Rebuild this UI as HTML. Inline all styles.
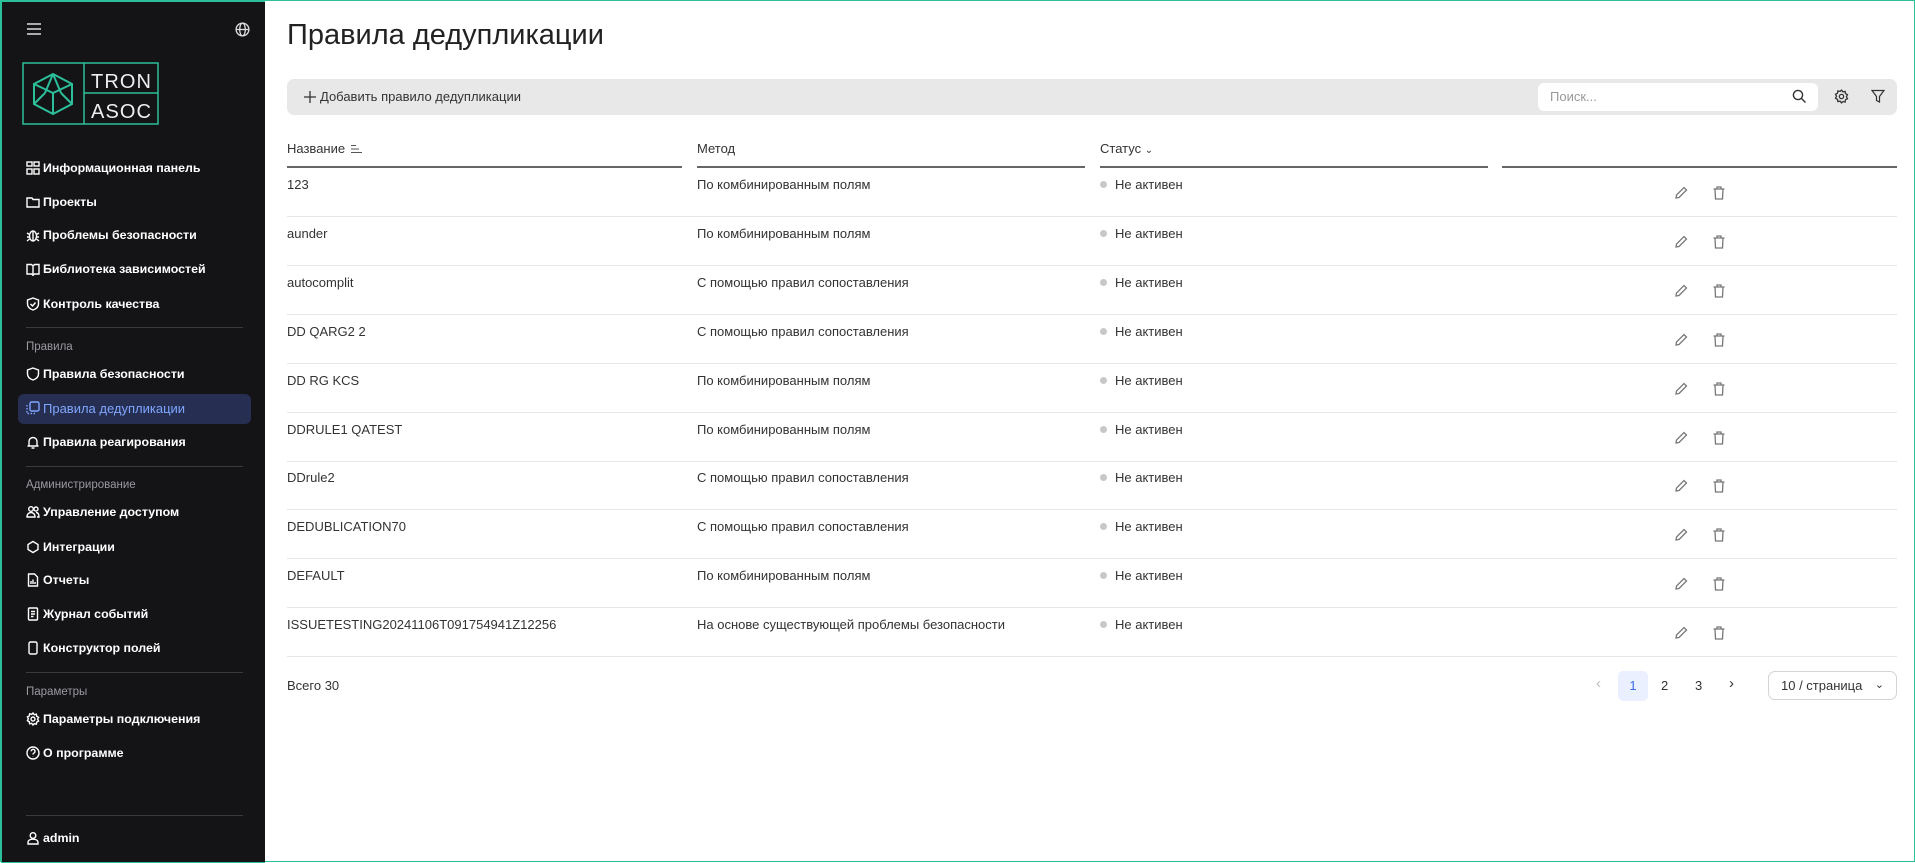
<!DOCTYPE html>
<html><head><meta charset="utf-8"><style>
*{box-sizing:border-box;margin:0;padding:0}
body{width:1915px;height:862px;overflow:hidden;background:#fff;font-family:"Liberation Sans",sans-serif;position:relative;border:1px solid #2bbf9a}
.sb{position:absolute;left:0;top:0;width:264px;height:862px;background:#141416;border-left:1px solid #2bbf9a;border-top:1px solid #2bbf9a;border-bottom:1px solid #2bbf9a}
.a{position:absolute;white-space:nowrap}
.it{position:absolute;left:24px;color:#fff;font-size:12.4px;font-weight:bold;display:flex;align-items:center;gap:3px;height:20px}
.it svg{width:14px;height:14px;stroke:#fff;fill:none;stroke-width:1.4}
.sec{position:absolute;left:24px;color:#9a9aa0;font-size:11.5px}
.dv{position:absolute;left:24px;width:217px;height:1px;background:#3a3a3e}
.t{font-size:13px;color:#333}
.sep{position:absolute;height:1px;background:#e6e6e6;left:286px;width:1610px}
.st{font-size:13px;color:#333}
.dot{display:inline-block;width:7px;height:7px;border-radius:50%;background:#c8c8c8;margin-right:8px;vertical-align:1px}
.ic{position:absolute;width:16px;height:16px;stroke:#777;fill:none;stroke-width:1.3}
</style></head><body>
<div class="sb">
<svg class="a" style="left:25px;top:21px" width="14" height="12" viewBox="0 0 14 12" stroke="#ddd" stroke-width="1.5"><path d="M0 1h14M0 6h14M0 11h14"/></svg>
<svg class="a" style="left:233px;top:20px" width="15" height="15" viewBox="0 0 16 16" stroke="#ddd" fill="none" stroke-width="1.4"><circle cx="8" cy="8" r="6.8"/><ellipse cx="8" cy="8" rx="3" ry="6.8"/><path d="M1 8h14"/></svg>
<svg class="a" style="left:20px;top:60px" width="137" height="63" viewBox="0 0 137 63">
<rect x="1" y="1" width="135" height="61" fill="none" stroke="#2bbf9a" stroke-width="1.5"/>
<path d="M62 1v61M62 31h74" stroke="#2bbf9a" stroke-width="1.5"/>
<g fill="none" stroke="#2bbf9a" stroke-width="2"><path d="M31 12l19 10v20l-19 10-19-10V22z"/><path d="M12 22l19 9 19-9M31 31v21M31 12l-8 19M31 12l8 19M12 42l11-11M50 42l-11-11"/></g>
<text x="69" y="26" fill="#eee" font-size="20" textLength="60" font-family="Liberation Sans">TRON</text>
<text x="69" y="56" fill="#eee" font-size="20" textLength="60" font-family="Liberation Sans">ASOC</text>
</svg>
<div class="it" style="top:156px"><svg viewBox="0 0 14 14"><rect x="1" y="1" width="5" height="4"/><rect x="8" y="1" width="5" height="4"/><rect x="1" y="8" width="5" height="5"/><rect x="8" y="8" width="5" height="5"/></svg>Информационная панель</div>
<div class="it" style="top:190px"><svg viewBox="0 0 14 14"><path d="M1 3h5l1 1.5h6V12H1z"/></svg>Проекты</div>
<div class="it" style="top:223px"><svg viewBox="0 0 14 14"><ellipse cx="7" cy="8" rx="3.5" ry="5"/><path d="M1 5l2.5 1.5M13 5l-2.5 1.5M1 9h2.5M13 9h-2.5M1 13l2.5-2M13 13l-2.5-2M7 3v10"/></svg>Проблемы безопасности</div>
<div class="it" style="top:257px"><svg viewBox="0 0 14 14"><path d="M1 2.5h4.5L7 4v9L5.5 12H1zM13 2.5H8.5L7 4v9l1.5-1H13z"/></svg>Библиотека зависимостей</div>
<div class="it" style="top:292px"><svg viewBox="0 0 14 14"><path d="M7 1l5.5 2v4c0 3-2.5 5-5.5 6C4 12 1.5 10 1.5 7V3z"/><path d="M4.5 7l2 2 3-3.5"/></svg>Контроль качества</div>
<div class="dv" style="top:325px"></div>
<div class="sec" style="top:339px">Правила</div>
<div class="it" style="top:362px"><svg viewBox="0 0 14 14"><path d="M7 1l5.5 2v4c0 3-2.5 5-5.5 6C4 12 1.5 10 1.5 7V3z"/></svg>Правила безопасности</div>
<div class="a" style="left:16px;top:392px;width:233px;height:30px;background:#262f52;border-radius:6px"></div>
<div class="it" style="top:396px;color:#7fa6ff;font-weight:normal;font-size:13px"><svg viewBox="0 0 14 14" style="stroke:#7fa6ff"><rect x="4" y="1" width="9" height="9" rx="1.5"/><path d="M1 4v8.5h8.5" stroke-dasharray="1.5 1.5"/></svg>Правила дедупликации</div>
<div class="it" style="top:430px"><svg viewBox="0 0 14 14"><path d="M3 11V6.5a4 4 0 018 0V11zM1.5 11h11M5.5 13h3"/></svg>Правила реагирования</div>
<div class="dv" style="top:464px"></div>
<div class="sec" style="top:477px">Администрирование</div>
<div class="it" style="top:500px"><svg viewBox="0 0 14 14"><circle cx="5" cy="4" r="2.3"/><circle cx="10" cy="4" r="2"/><path d="M1 12c0-3 2-4.5 4-4.5s4 1.5 4 4.5zM10 7.5c2 0 3 1.5 3 4.5h-2"/></svg>Управление доступом</div>
<div class="it" style="top:535px"><svg viewBox="0 0 14 14"><path d="M7 1.5l5 3v5l-5 3-5-3v-5z"/></svg>Интеграции</div>
<div class="it" style="top:568px"><svg viewBox="0 0 14 14"><path d="M2.5 1h6l3 3v9h-9z"/><path d="M5 11V8M7 11V6.5M9 11V9"/></svg>Отчеты</div>
<div class="it" style="top:602px"><svg viewBox="0 0 14 14"><rect x="2.5" y="1" width="9" height="12" rx="1"/><path d="M5 4.5h4M5 7h4M5 9.5h2.5"/></svg>Журнал событий</div>
<div class="it" style="top:636px"><svg viewBox="0 0 14 14"><rect x="3" y="1" width="8" height="12" rx="1.5"/></svg>Конструктор полей</div>
<div class="dv" style="top:670px"></div>
<div class="sec" style="top:684px">Параметры</div>
<div class="it" style="top:707px"><svg viewBox="0 0 14 14"><circle cx="7" cy="7" r="2"/><path d="M7 1l1.3 1.7 2.1-.5.3 2.1 1.9 1-1 1.9 1 1.9-1.9 1-.3 2.1-2.1-.5L7 13l-1.3-1.7-2.1.5-.3-2.1-1.9-1 1-1.9-1-1.9 1.9-1 .3-2.1 2.1.5z"/></svg>Параметры подключения</div>
<div class="it" style="top:741px"><svg viewBox="0 0 14 14"><circle cx="7" cy="7" r="6"/><path d="M5.2 5.3a1.9 1.9 0 113 1.5c-.8.5-1.2.9-1.2 1.7M7 10.2v.3"/></svg>О программе</div>
<div class="dv" style="top:813px"></div>
<div class="it" style="top:826px"><svg viewBox="0 0 14 14"><circle cx="7" cy="4.5" r="2.8"/><path d="M2 13v-1.5c0-2 2-3.3 5-3.3s5 1.3 5 3.3V13z"/></svg>admin</div>
</div>

<div class="a" style="left:286px;top:18px;font-size:29px;color:#222">Правила дедупликации</div>
<div class="a" style="left:286px;top:78px;width:1610px;height:36px;background:#e8e8e8;border-radius:7px"></div>
<svg class="a" style="left:302px;top:89px" width="14" height="14" viewBox="0 0 14 14" stroke="#333" stroke-width="1.3"><path d="M7 1v12M1 7h12"/></svg>
<div class="a t" style="left:319px;top:88px">Добавить правило дедупликации</div>
<div class="a" style="left:1537px;top:82px;width:280px;height:28px;background:#fff;border-radius:6px"></div>
<div class="a" style="left:1549px;top:88px;font-size:13px;color:#999">Поиск...</div>
<svg class="a" style="left:1791px;top:88px" width="15" height="15" viewBox="0 0 15 15" stroke="#333" fill="none" stroke-width="1.4"><circle cx="6" cy="6" r="4.6"/><path d="M9.5 9.5l4 4"/></svg>
<svg class="a" style="left:1833px;top:88px" width="15" height="15" viewBox="0 0 14 14" stroke="#333" fill="none" stroke-width="1.2"><circle cx="7" cy="7" r="2"/><path d="M7 1l1.3 1.7 2.1-.5.3 2.1 1.9 1-1 1.9 1 1.9-1.9 1-.3 2.1-2.1-.5L7 13l-1.3-1.7-2.1.5-.3-2.1-1.9-1 1-1.9-1-1.9 1.9-1 .3-2.1 2.1.5z"/></svg>
<svg class="a" style="left:1870px;top:88px" width="14" height="15" viewBox="0 0 14 15" stroke="#333" fill="none" stroke-width="1.2"><path d="M1 1.5h12L8.5 7.5V13l-3-1.5v-4z"/></svg>

<div class="a t" style="left:286px;top:140px">Название</div>
<svg class="a" style="left:350px;top:143px" width="12" height="10" viewBox="0 0 12 10" stroke="#555" stroke-width="1"><path d="M0 1.5h5M0 5h8M0 8.5h11"/></svg>
<div class="a t" style="left:696px;top:140px">Метод</div>
<div class="a st" style="left:1099px;top:140px">Статус <span style="font-size:10px">&#8964;</span></div>
<div class="a" style="left:286px;top:165px;width:395px;height:2px;background:#666"></div>
<div class="a" style="left:696px;top:165px;width:388px;height:2px;background:#666"></div>
<div class="a" style="left:1099px;top:165px;width:388px;height:2px;background:#666"></div>
<div class="a" style="left:1501px;top:165px;width:395px;height:2px;background:#666"></div>

<div id="rows"></div>
<script>
var d=[["123","По комбинированным полям"],["aunder","По комбинированным полям"],["autocomplit","С помощью правил сопоставления"],["DD QARG2 2","С помощью правил сопоставления"],["DD RG KCS","По комбинированным полям"],["DDRULE1 QATEST","По комбинированным полям"],["DDrule2","С помощью правил сопоставления"],["DEDUBLICATION70","С помощью правил сопоставления"],["DEFAULT","По комбинированным полям"],["ISSUETESTING20241106T091754941Z12256","На основе существующей проблемы безопасности"]];
var h="";
for(var i=0;i<10;i++){var y=176+i*48.9;
h+='<div class="a t" style="left:286px;top:'+y+'px">'+d[i][0]+'</div>';
h+='<div class="a t" style="left:696px;top:'+y+'px">'+d[i][1]+'</div>';
h+='<div class="a st" style="left:1099px;top:'+y+'px"><span class="dot"></span>Не активен</div>';
h+='<svg class="ic" style="left:1672px;top:'+(y+8)+'px" viewBox="0 0 16 16"><path d="M3 13l.5-3L11 2.5l2.5 2.5L6 12.5z"/></svg>';
h+='<svg class="ic" style="left:1710px;top:'+(y+8)+'px" viewBox="0 0 16 16"><path d="M2.5 4h11M6 4V2h4v2M4 4l.5 10h7L12 4"/></svg>';
h+='<div class="sep" style="top:'+(215+i*48.9)+'px"></div>';}
document.getElementById("rows").innerHTML=h;
</script>

<div class="a t" style="left:286px;top:677px">Всего 30</div>
<div class="a" style="left:1595px;top:674px;font-size:15px;color:#bbb">&#8249;</div>
<div class="a" style="left:1617px;top:670px;width:30px;height:30px;background:#eaf0ff;border-radius:5px;color:#3a6ee8;font-size:13px;text-align:center;line-height:30px">1</div>
<div class="a" style="left:1660px;top:677px;font-size:13px;color:#333">2</div>
<div class="a" style="left:1694px;top:677px;font-size:13px;color:#333">3</div>
<div class="a" style="left:1728px;top:674px;font-size:15px;color:#333">&#8250;</div>
<div class="a" style="left:1767px;top:670px;width:129px;height:29px;border:1px solid #d4d4d4;border-radius:7px;font-size:13px;color:#333;line-height:27px;padding-left:12px">10 / страница <span style="position:absolute;right:12px;font-size:11px">&#8964;</span></div>
</body></html>
